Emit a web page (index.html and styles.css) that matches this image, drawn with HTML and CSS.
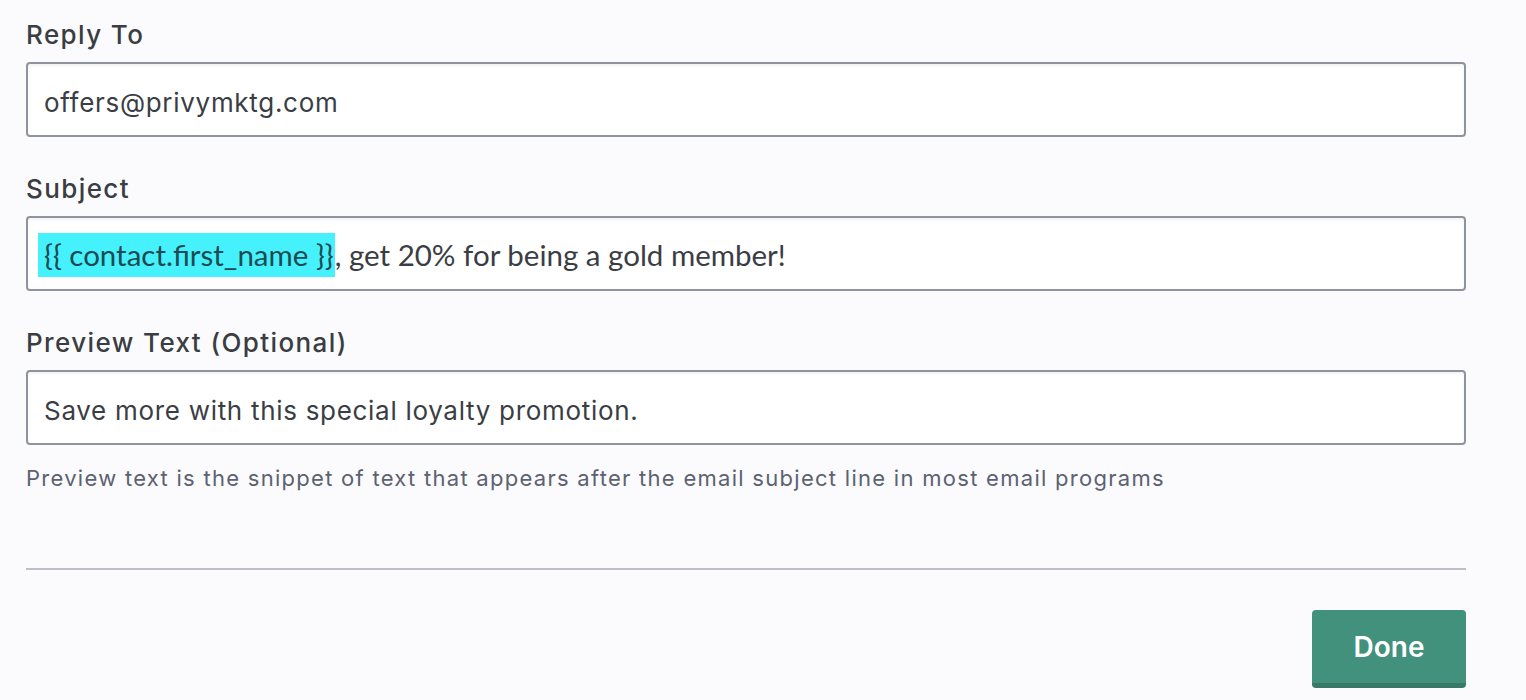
FILE: index.html
```html
<!DOCTYPE html>
<html>
<head>
<meta charset="utf-8">
<link rel="stylesheet" href="styles.css">
</head>
<body>
<div class="panel">
  <div class="field">
    <label class="label">Reply To</label>
    <div class="input">offers@privymktg.com</div>
  </div>
  <div class="field">
    <label class="label">Subject</label>
    <div class="input input-rich"><span class="tag">{{ contact.first_name }}</span>, get 20% for being a gold member!</div>
  </div>
  <div class="field">
    <label class="label">Preview Text (Optional)</label>
    <div class="input">Save more with this special loyalty promotion.</div>
    <p class="help">Preview text is the snippet of text that appears after the email subject line in most email programs</p>
  </div>
  <hr class="divider">
  <div class="actions">
    <button class="btn">Done</button>
  </div>
</div>
</body>
</html>
```

FILE: styles.css
```css
html, body {
  margin: 0;
  padding: 0;
  background: #fbfbfd;
}
body {
  font-family: Inter, "Open Sans", sans-serif;
  color: #3a3e44;
}
.panel {
  width: 1440px;
  padding: 20px 0 0 26px;
}
.field {
  display: flex;
  flex-direction: column;
}
.field + .field {
  margin-top: 37px;
}
.label {
  font-size: 26px;
  line-height: 30px;
  font-weight: 500;
  letter-spacing: 1.4px;
  color: #3a3d42;
  margin-bottom: 12px;
}
.input {
  box-sizing: border-box;
  height: 75px;
  border: 2px solid #8e939d;
  border-radius: 4px;
  background: #fff;
  box-shadow: inset 0 2px 3px rgba(0, 0, 0, 0.05);
  display: flex;
  align-items: center;
  padding: 6px 16px 0;
  font-size: 26px;
  letter-spacing: 0.7px;
  color: #3a3e44;
  white-space: pre;
}
.input-rich {
  font-family: Lato, Inter, sans-serif;
  font-size: 29.5px;
  letter-spacing: 0;
  padding: 2px 16px 0;
}
.tag {
  background: #44f1fd;
  color: #1f4a50;
  padding: 4px 1px 4px 6px;
  margin-left: -6px;
  line-height: 36px;
}
.help {
  margin: 20px 0 0;
  font-size: 22px;
  line-height: 26px;
  letter-spacing: 1.28px;
  color: #5b6271;
}
.divider {
  margin: 77px 0 0;
  border: 0;
  height: 2px;
  background: #bcbec8;
}
.actions {
  display: flex;
  justify-content: flex-end;
  margin-top: 40px;
}
.btn {
  box-sizing: border-box;
  width: 154px;
  height: 78px;
  border: 0;
  border-bottom: 5px solid #367a67;
  border-radius: 4px;
  background: #41917d;
  color: #fff;
  font-family: Inter, "Open Sans", sans-serif;
  font-size: 28px;
  font-weight: 600;
  padding: 0;
}
```
